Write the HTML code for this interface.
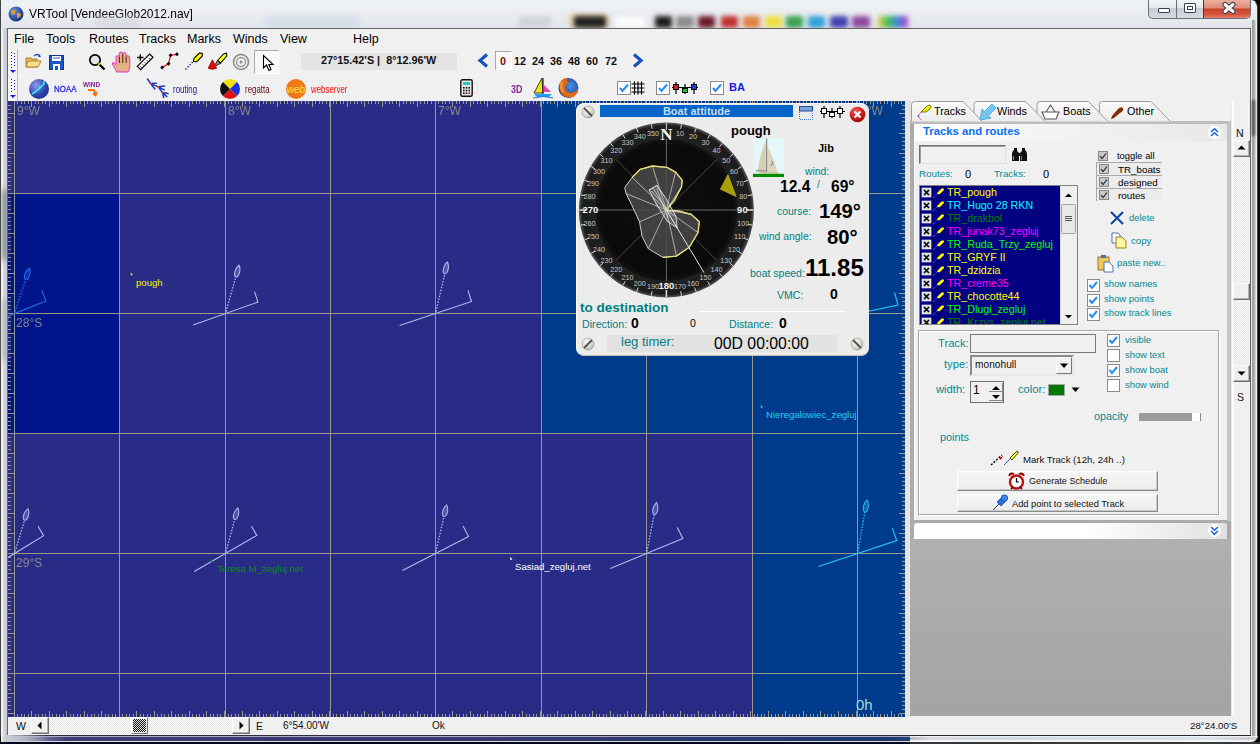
<!DOCTYPE html>
<html><head><meta charset="utf-8">
<style>
*{margin:0;padding:0;box-sizing:border-box}
html,body{width:1260px;height:744px;overflow:hidden;background:#0a0a0a;font-family:"Liberation Sans",sans-serif;font-size:11px;color:#000}
.a{position:absolute}
.t{position:absolute;white-space:nowrap;line-height:1}
svg{position:absolute;overflow:visible}
#frame{position:absolute;left:0;top:0;width:1257.5px;height:742px;border-radius:0 7px 7px 8px;background:linear-gradient(180deg,#eceff3 0,#f0f2f5 3px,#e8ebef 14px,#e2e6eb 28px,#d3d9e0 200px,#cfd5dc);border:1px solid #444;border-top-color:#e8eef4}
#client{position:absolute;left:7px;top:28px;width:1244px;height:708px;background:#f0f0f0;border:1px solid #646464}
.blob{position:absolute;top:16px;height:12px;filter:blur(2.4px);border-radius:2px}
.menu{position:absolute;top:32px;font-size:12.5px;color:#000}
.tl{color:#008080}
.grip{position:absolute;left:8px;width:10px;background:#f4f4f4;border-right:1px solid #b8b8b8;border-left:1px solid #fff}

</style></head><body>
<div id="frame"></div>
<div class="blob" style="left:569px;width:40px;background:#e6d4ae;top:14px;height:14px"></div>
<div class="blob" style="left:574px;width:32px;background:#222"></div>
<div class="blob" style="left:615px;width:30px;background:#fafafa"></div>
<div class="blob" style="left:655px;width:17px;background:#1c1c1c"></div>
<div class="blob" style="left:676px;width:18px;background:#8c8c8c"></div>
<div class="blob" style="left:698px;width:17px;background:#6e1a28"></div>
<div class="blob" style="left:721px;width:17px;background:#c0302e"></div>
<div class="blob" style="left:743px;width:17px;background:#e08040"></div>
<div class="blob" style="left:765px;width:17px;background:#eee040"></div>
<div class="blob" style="left:786px;width:17px;background:#3aa050"></div>
<div class="blob" style="left:808px;width:17px;background:#30a0d8"></div>
<div class="blob" style="left:830px;width:18px;background:#4040b0"></div>
<div class="blob" style="left:852px;width:18px;background:#9048a0"></div>
<div class="blob" style="left:878px;width:30px;background:linear-gradient(90deg,#e0d040,#40c060,#4080e0,#c040c0)"></div>
<!-- app icon globe -->
<svg style="left:8px;top:6px" width="16" height="16" viewBox="0 0 16 16"><defs><radialGradient id="glb" cx="0.35" cy="0.3" r="0.8"><stop offset="0" stop-color="#6a8fd8"/><stop offset="1" stop-color="#0a2a78"/></radialGradient></defs><circle cx="8" cy="8" r="7.5" fill="url(#glb)"/><path d="M3 5 Q6 3 8 5 Q7 8 5 9 Q3 8 3 5Z M9 7 Q12 6 13 9 Q11 13 9 12Z" fill="#e0a030"/></svg>
<div class="t" style="left:29px;top:7px;font-size:12px;color:#000;transform:scaleY(1.08);transform-origin:top">VRTool [VendeeGlob2012.nav]</div>
<!-- caption buttons -->
<div class="a" style="left:1148px;top:-1px;width:103px;height:20px;border:1px solid #6b6f7a;border-top:none;border-radius:0 0 5px 5px;overflow:hidden;background:linear-gradient(#f2f4f7,#e4e8ee 45%,#c8ccd4 50%,#d6dae2)">
  <div class="a" style="left:27px;top:0;width:1px;height:20px;background:#6b6f7a"></div>
  <div class="a" style="left:54px;top:0;width:49px;height:20px;border-left:1px solid #6b2a20;background:linear-gradient(#f0b4a4,#e08a74 45%,#c8402a 50%,#d85a40 80%,#e89080)"></div>
  <div class="a" style="left:9px;top:9px;width:12px;height:5px;background:#fff;border:1px solid #3b4256;border-radius:1px"></div>
  <div class="a" style="left:35px;top:4px;width:12px;height:10px;background:#fff;border:1px solid #3b4256;border-radius:1px"><div class="a" style="left:2px;top:2px;width:6px;height:4px;border:1px solid #3b4256"></div></div>
  <svg style="left:73px;top:3px" width="14" height="12" viewBox="0 0 14 12"><path d="M3 2.5 L11 9.5 M11 2.5 L3 9.5" stroke="#3b4256" stroke-width="5.2" stroke-linecap="round"/><path d="M3 2.5 L11 9.5 M11 2.5 L3 9.5" stroke="#fff" stroke-width="3" stroke-linecap="round"/></svg>
</div>
<div class="blob" style="left:519px;width:32px;background:#c4c8cc;opacity:0.6"></div>
<div class="blob" style="left:265px;width:95px;background:#c8d4e4;opacity:0.5"></div>
<div class="blob" style="left:95px;width:45px;background:#d0d4d8;opacity:0.5"></div>
<div id="client"></div>

<div class="menu t" style="left:14px;top:33px">File</div>
<div class="menu t" style="left:46px;top:33px">Tools</div>
<div class="menu t" style="left:89px;top:33px">Routes</div>
<div class="menu t" style="left:139px;top:33px">Tracks</div>
<div class="menu t" style="left:187px;top:33px">Marks</div>
<div class="menu t" style="left:233px;top:33px">Winds</div>
<div class="menu t" style="left:280px;top:33px">View</div>
<div class="menu t" style="left:353px;top:33px">Help</div>
<!-- grips -->
<div class="grip" style="top:49px;height:26px"></div>
<div class="grip" style="top:76px;height:25px"></div>
<svg style="left:9px;top:51px" width="9" height="24" viewBox="0 0 9 24"><g fill="#1a1ad8"><rect x="2" y="1" width="1" height="1"/><rect x="2" y="4" width="1" height="1"/><rect x="2" y="7" width="1" height="1"/><rect x="2" y="10" width="1" height="1"/><rect x="2" y="13" width="1" height="1"/><rect x="2" y="16" width="1" height="1"/><rect x="5" y="2" width="1" height="1"/><rect x="5" y="5" width="1" height="1"/><rect x="5" y="8" width="1" height="1"/><rect x="5" y="11" width="1" height="1"/><rect x="5" y="14" width="1" height="1"/><path d="M1 19 H7 L4 22Z"/></g></svg>
<svg style="left:9px;top:78px" width="9" height="24" viewBox="0 0 9 24"><g fill="#1a1ad8"><rect x="2" y="1" width="1" height="1"/><rect x="2" y="4" width="1" height="1"/><rect x="2" y="7" width="1" height="1"/><rect x="2" y="10" width="1" height="1"/><rect x="2" y="13" width="1" height="1"/><rect x="5" y="2" width="1" height="1"/><rect x="5" y="5" width="1" height="1"/><rect x="5" y="8" width="1" height="1"/><rect x="5" y="11" width="1" height="1"/><path d="M1 17 H7 L4 20Z"/></g></svg>
<!-- row1 icons -->
<!-- open folder -->
<svg style="left:25px;top:53px" width="17" height="16" viewBox="0 0 17 16"><path d="M1 5 H6 L7 6 H12 V14 H1Z" fill="#e8c060" stroke="#b08028" stroke-width="1"/><path d="M3 8 H16 L13 14 H1Z" fill="#f8e090" stroke="#b08028" stroke-width="1"/><path d="M9 3 Q12 0 15 3" fill="none" stroke="#2050b0" stroke-width="1.3"/><path d="M14 1 L16 4 L13 4Z" fill="#2050b0"/></svg>
<!-- save -->
<svg style="left:49px;top:55px" width="15" height="15" viewBox="0 0 15 15"><rect x="0.5" y="0.5" width="14" height="14" fill="#1a58c8" stroke="#0a3890"/><rect x="3" y="1" width="9" height="5" fill="#fff"/><rect x="4" y="2.5" width="7" height="1" fill="#1a58c8"/><rect x="4" y="9" width="7" height="6" fill="#fff"/><rect x="6" y="11" width="3" height="4" fill="#1a58c8"/></svg>
<!-- magnifier -->
<svg style="left:88px;top:53px" width="18" height="18" viewBox="0 0 18 18"><circle cx="7" cy="7" r="5.2" fill="#e4e4e4" stroke="#000" stroke-width="1.7"/><path d="M10.6 10.6 L16.5 16.5" stroke="#000" stroke-width="2.3"/><path d="M10.4 10.4 L11.8 11.8" stroke="#f0e000" stroke-width="2.2"/></svg>
<!-- hand -->
<svg style="left:111px;top:51px" width="21" height="23" viewBox="111 51 21 23"><path d="M116.5 72 Q115.5 69 114 67 L112.5 64 Q112 62.5 113.5 62.5 L116 64.5 V57.5 Q116 55.5 117.8 55.8 L119.3 56 V53.5 Q119.5 52 121 52 Q122.5 52 122.6 53.5 L122.8 53.2 Q123.5 52.3 124.8 52.6 Q126.2 53 126.2 54.5 V56.5 Q127 55.5 128.3 55.8 Q129.8 56.2 129.8 58 V66 Q129.8 69.5 128 72Z" fill="#e6ae84" stroke="#e020d0" stroke-width="0.9"/><path d="M119.4 56.5 V63 M122.7 54 V63 M126.2 56.5 V63" stroke="#5a3020" stroke-width="1.1"/></svg>
<!-- ruler -->
<svg style="left:134px;top:50px" width="22" height="24" viewBox="134 50 22 24"><path d="M137 57.5 H143.5 M140.3 54.3 V60.7" stroke="#000" stroke-width="1.3"/><path d="M137.3 66.3 L149.6 54 L153 57.3 L140.6 69.6Z" fill="#fff" stroke="#000" stroke-width="1.2"/><path d="M140.5 66.5 l1 1 M142.6 64.4 l1 1 M144.7 62.3 l1 1 M146.8 60.2 l1 1 M148.9 58.1 l1 1" stroke="#000" stroke-width="1"/></svg>
<!-- route polyline -->
<svg style="left:158px;top:50px" width="22" height="22" viewBox="158 50 22 22"><path d="M162.2 67.5 L168.5 63.8 L170.6 55.2 L176.9 54.3" fill="none" stroke="#f00000" stroke-width="1.2"/><g fill="#000"><path d="M162.2 65.5 l2 2 l-2 2 l-2 -2z"/><path d="M168.5 61.8 l2 2 l-2 2 l-2 -2z"/><path d="M170.6 53.2 l2 2 l-2 2 l-2 -2z"/><path d="M176.9 52.3 l2 2 l-2 2 l-2 -2z"/></g></svg>
<!-- yellow pen dotted -->
<svg style="left:182px;top:50px" width="22" height="22" viewBox="182 50 22 22"><path d="M185.5 69.5 L193.5 61" stroke="#1020b0" stroke-width="1.4" stroke-dasharray="1.4 1.6"/><path d="M193.5 61.5 L193.8 58.6 L199.5 53 L202.3 53.2 L202.3 56 L196.5 61.8Z" fill="#ffff00" stroke="#000" stroke-width="1.1" stroke-linejoin="round"/></svg>
<!-- paint / highlighter -->
<svg style="left:206px;top:50px" width="22" height="22" viewBox="206 50 22 22"><path d="M217.5 60.5 L223.5 54 L226.5 53 L226.8 56 L220.5 63.2Z" fill="#ffff00" stroke="#000" stroke-width="1.1" stroke-linejoin="round"/><path d="M217.5 60.5 L220.5 63.2 L216.2 65.5 L215.3 64.6Z" fill="#999" stroke="#000" stroke-width="0.9"/><path d="M212.4 59.8 L208.2 68.2 Q212.4 70.5 216.6 68.2Z" fill="#f00000" stroke="#700" stroke-width="0.7"/></svg>
<!-- target -->
<svg style="left:232px;top:53px" width="18" height="18" viewBox="0 0 18 18"><circle cx="9" cy="9" r="7.5" fill="none" stroke="#8a8a8a" stroke-width="1.6"/><circle cx="9" cy="9" r="4.5" fill="none" stroke="#9a9a9a" stroke-width="1.4"/><circle cx="9" cy="9" r="1.5" fill="#888"/></svg>
<!-- pointer selected -->
<div class="a" style="left:254px;top:50px;width:25px;height:24px;border:1px solid #a8a8a8;border-right-color:#fff;border-bottom-color:#fff;background:#f8f8f8"></div>
<svg style="left:262px;top:54px" width="14" height="18" viewBox="0 0 14 18"><path d="M1.5 1.5 V14 L4.5 11 L7 16.5 L9 15.5 L6.8 10.5 H11Z" fill="#fff" stroke="#000" stroke-width="1.1"/></svg>
<!-- coord box -->
<div class="a" style="left:301px;top:53px;width:156px;height:17px;background:#e4e4e4"></div>
<div class="t" style="left:321px;top:55px;font-size:10.8px;font-weight:bold;color:#111">27°15.42'S |&nbsp; 8°12.96'W</div>
<!-- time chevrons -->
<svg style="left:477px;top:53px" width="13" height="15" viewBox="0 0 13 15"><path d="M10 1.5 L3 7.5 L10 13.5" fill="none" stroke="#1a50c0" stroke-width="3.2"/></svg>
<div class="a" style="left:495px;top:51px;width:17px;height:19px;border:1px solid #a8a8a8;border-right-color:#fff;border-bottom-color:#fff;background:#f6f6f6"></div>
<div class="t" style="left:500px;top:56px;font-size:10.8px;font-weight:bold;color:#7a1010">0</div>
<div class="t" style="left:514px;top:56px;font-size:10.8px;font-weight:bold;color:#111">12</div>
<div class="t" style="left:532px;top:56px;font-size:10.8px;font-weight:bold;color:#111">24</div>
<div class="t" style="left:550px;top:56px;font-size:10.8px;font-weight:bold;color:#111">36</div>
<div class="t" style="left:568px;top:56px;font-size:10.8px;font-weight:bold;color:#111">48</div>
<div class="t" style="left:586px;top:56px;font-size:10.8px;font-weight:bold;color:#111">60</div>
<div class="t" style="left:605px;top:56px;font-size:10.8px;font-weight:bold;color:#111">72</div>
<svg style="left:631px;top:53px" width="13" height="15" viewBox="0 0 13 15"><path d="M3 1.5 L10 7.5 L3 13.5" fill="none" stroke="#1a50c0" stroke-width="3.2"/></svg>

<div class="a" style="left:8px;top:101px;width:897px;height:616px;overflow:hidden;background:#292c86">
<svg style="left:0;top:0" width="897" height="616" viewBox="8 101 897 616" shape-rendering="crispEdges">
<rect x="8" y="193" width="111" height="240" fill="#00158a"/>
<rect x="541" y="101" width="364" height="332" fill="#003a8b"/>
<rect x="752" y="433" width="153" height="284" fill="#003a8b"/>
<path d="M119.5 101V717 M225.5 101V717 M330.5 101V717 M435.5 101V717 M541.5 101V717 M646.5 101V717 M752.5 101V717 M857.5 101V717 M8 193.5H905 M8 313.5H905 M8 433.5H905 M8 553.5H905 M8 673.5H905 M14.5 101V717" stroke="#9a988a" stroke-width="1" fill="none"/>
<path d="M17.5 101v3 M17.5 717v-3 M21.5 101v3 M21.5 717v-3 M24.5 101v3 M24.5 717v-3 M28.5 101v3 M28.5 717v-3 M31.5 101v6 M31.5 717v-6 M35.5 101v3 M35.5 717v-3 M38.5 101v3 M38.5 717v-3 M42.5 101v3 M42.5 717v-3 M45.5 101v3 M45.5 717v-3 M49.5 101v6 M49.5 717v-6 M52.5 101v3 M52.5 717v-3 M56.5 101v3 M56.5 717v-3 M59.5 101v3 M59.5 717v-3 M63.5 101v3 M63.5 717v-3 M66.5 101v6 M66.5 717v-6 M70.5 101v3 M70.5 717v-3 M73.5 101v3 M73.5 717v-3 M77.5 101v3 M77.5 717v-3 M80.5 101v3 M80.5 717v-3 M84.5 101v6 M84.5 717v-6 M87.5 101v3 M87.5 717v-3 M91.5 101v3 M91.5 717v-3 M94.5 101v3 M94.5 717v-3 M98.5 101v3 M98.5 717v-3 M101.5 101v6 M101.5 717v-6 M105.5 101v3 M105.5 717v-3 M108.5 101v3 M108.5 717v-3 M112.5 101v3 M112.5 717v-3 M115.5 101v3 M115.5 717v-3 M119.5 101v6 M119.5 717v-6 M122.5 101v3 M122.5 717v-3 M126.5 101v3 M126.5 717v-3 M129.5 101v3 M129.5 717v-3 M133.5 101v3 M133.5 717v-3 M136.5 101v6 M136.5 717v-6 M140.5 101v3 M140.5 717v-3 M143.5 101v3 M143.5 717v-3 M147.5 101v3 M147.5 717v-3 M150.5 101v3 M150.5 717v-3 M154.5 101v6 M154.5 717v-6 M157.5 101v3 M157.5 717v-3 M161.5 101v3 M161.5 717v-3 M164.5 101v3 M164.5 717v-3 M168.5 101v3 M168.5 717v-3 M171.5 101v6 M171.5 717v-6 M175.5 101v3 M175.5 717v-3 M178.5 101v3 M178.5 717v-3 M182.5 101v3 M182.5 717v-3 M185.5 101v3 M185.5 717v-3 M189.5 101v6 M189.5 717v-6 M192.5 101v3 M192.5 717v-3 M196.5 101v3 M196.5 717v-3 M199.5 101v3 M199.5 717v-3 M203.5 101v3 M203.5 717v-3 M206.5 101v6 M206.5 717v-6 M210.5 101v3 M210.5 717v-3 M213.5 101v3 M213.5 717v-3 M217.5 101v3 M217.5 717v-3 M220.5 101v3 M220.5 717v-3 M224.5 101v6 M224.5 717v-6 M228.5 101v3 M228.5 717v-3 M231.5 101v3 M231.5 717v-3 M235.5 101v3 M235.5 717v-3 M238.5 101v3 M238.5 717v-3 M242.5 101v6 M242.5 717v-6 M245.5 101v3 M245.5 717v-3 M249.5 101v3 M249.5 717v-3 M252.5 101v3 M252.5 717v-3 M256.5 101v3 M256.5 717v-3 M259.5 101v6 M259.5 717v-6 M263.5 101v3 M263.5 717v-3 M266.5 101v3 M266.5 717v-3 M270.5 101v3 M270.5 717v-3 M273.5 101v3 M273.5 717v-3 M277.5 101v6 M277.5 717v-6 M280.5 101v3 M280.5 717v-3 M284.5 101v3 M284.5 717v-3 M287.5 101v3 M287.5 717v-3 M291.5 101v3 M291.5 717v-3 M294.5 101v6 M294.5 717v-6 M298.5 101v3 M298.5 717v-3 M301.5 101v3 M301.5 717v-3 M305.5 101v3 M305.5 717v-3 M308.5 101v3 M308.5 717v-3 M312.5 101v6 M312.5 717v-6 M315.5 101v3 M315.5 717v-3 M319.5 101v3 M319.5 717v-3 M322.5 101v3 M322.5 717v-3 M326.5 101v3 M326.5 717v-3 M329.5 101v6 M329.5 717v-6 M333.5 101v3 M333.5 717v-3 M336.5 101v3 M336.5 717v-3 M340.5 101v3 M340.5 717v-3 M343.5 101v3 M343.5 717v-3 M347.5 101v6 M347.5 717v-6 M350.5 101v3 M350.5 717v-3 M354.5 101v3 M354.5 717v-3 M357.5 101v3 M357.5 717v-3 M361.5 101v3 M361.5 717v-3 M364.5 101v6 M364.5 717v-6 M368.5 101v3 M368.5 717v-3 M371.5 101v3 M371.5 717v-3 M375.5 101v3 M375.5 717v-3 M378.5 101v3 M378.5 717v-3 M382.5 101v6 M382.5 717v-6 M385.5 101v3 M385.5 717v-3 M389.5 101v3 M389.5 717v-3 M392.5 101v3 M392.5 717v-3 M396.5 101v3 M396.5 717v-3 M399.5 101v6 M399.5 717v-6 M403.5 101v3 M403.5 717v-3 M406.5 101v3 M406.5 717v-3 M410.5 101v3 M410.5 717v-3 M413.5 101v3 M413.5 717v-3 M417.5 101v6 M417.5 717v-6 M420.5 101v3 M420.5 717v-3 M424.5 101v3 M424.5 717v-3 M427.5 101v3 M427.5 717v-3 M431.5 101v3 M431.5 717v-3 M435.5 101v6 M435.5 717v-6 M438.5 101v3 M438.5 717v-3 M442.5 101v3 M442.5 717v-3 M445.5 101v3 M445.5 717v-3 M449.5 101v3 M449.5 717v-3 M452.5 101v6 M452.5 717v-6 M456.5 101v3 M456.5 717v-3 M459.5 101v3 M459.5 717v-3 M463.5 101v3 M463.5 717v-3 M466.5 101v3 M466.5 717v-3 M470.5 101v6 M470.5 717v-6 M473.5 101v3 M473.5 717v-3 M477.5 101v3 M477.5 717v-3 M480.5 101v3 M480.5 717v-3 M484.5 101v3 M484.5 717v-3 M487.5 101v6 M487.5 717v-6 M491.5 101v3 M491.5 717v-3 M494.5 101v3 M494.5 717v-3 M498.5 101v3 M498.5 717v-3 M501.5 101v3 M501.5 717v-3 M505.5 101v6 M505.5 717v-6 M508.5 101v3 M508.5 717v-3 M512.5 101v3 M512.5 717v-3 M515.5 101v3 M515.5 717v-3 M519.5 101v3 M519.5 717v-3 M522.5 101v6 M522.5 717v-6 M526.5 101v3 M526.5 717v-3 M529.5 101v3 M529.5 717v-3 M533.5 101v3 M533.5 717v-3 M536.5 101v3 M536.5 717v-3 M540.5 101v6 M540.5 717v-6 M543.5 101v3 M543.5 717v-3 M547.5 101v3 M547.5 717v-3 M550.5 101v3 M550.5 717v-3 M554.5 101v3 M554.5 717v-3 M557.5 101v6 M557.5 717v-6 M561.5 101v3 M561.5 717v-3 M564.5 101v3 M564.5 717v-3 M568.5 101v3 M568.5 717v-3 M571.5 101v3 M571.5 717v-3 M575.5 101v6 M575.5 717v-6 M578.5 101v3 M578.5 717v-3 M582.5 101v3 M582.5 717v-3 M585.5 101v3 M585.5 717v-3 M589.5 101v3 M589.5 717v-3 M592.5 101v6 M592.5 717v-6 M596.5 101v3 M596.5 717v-3 M599.5 101v3 M599.5 717v-3 M603.5 101v3 M603.5 717v-3 M606.5 101v3 M606.5 717v-3 M610.5 101v6 M610.5 717v-6 M613.5 101v3 M613.5 717v-3 M617.5 101v3 M617.5 717v-3 M620.5 101v3 M620.5 717v-3 M624.5 101v3 M624.5 717v-3 M627.5 101v6 M627.5 717v-6 M631.5 101v3 M631.5 717v-3 M634.5 101v3 M634.5 717v-3 M638.5 101v3 M638.5 717v-3 M641.5 101v3 M641.5 717v-3 M645.5 101v6 M645.5 717v-6 M649.5 101v3 M649.5 717v-3 M652.5 101v3 M652.5 717v-3 M656.5 101v3 M656.5 717v-3 M659.5 101v3 M659.5 717v-3 M663.5 101v6 M663.5 717v-6 M666.5 101v3 M666.5 717v-3 M670.5 101v3 M670.5 717v-3 M673.5 101v3 M673.5 717v-3 M677.5 101v3 M677.5 717v-3 M680.5 101v6 M680.5 717v-6 M684.5 101v3 M684.5 717v-3 M687.5 101v3 M687.5 717v-3 M691.5 101v3 M691.5 717v-3 M694.5 101v3 M694.5 717v-3 M698.5 101v6 M698.5 717v-6 M701.5 101v3 M701.5 717v-3 M705.5 101v3 M705.5 717v-3 M708.5 101v3 M708.5 717v-3 M712.5 101v3 M712.5 717v-3 M715.5 101v6 M715.5 717v-6 M719.5 101v3 M719.5 717v-3 M722.5 101v3 M722.5 717v-3 M726.5 101v3 M726.5 717v-3 M729.5 101v3 M729.5 717v-3 M733.5 101v6 M733.5 717v-6 M736.5 101v3 M736.5 717v-3 M740.5 101v3 M740.5 717v-3 M743.5 101v3 M743.5 717v-3 M747.5 101v3 M747.5 717v-3 M750.5 101v6 M750.5 717v-6 M754.5 101v3 M754.5 717v-3 M757.5 101v3 M757.5 717v-3 M761.5 101v3 M761.5 717v-3 M764.5 101v3 M764.5 717v-3 M768.5 101v6 M768.5 717v-6 M771.5 101v3 M771.5 717v-3 M775.5 101v3 M775.5 717v-3 M778.5 101v3 M778.5 717v-3 M782.5 101v3 M782.5 717v-3 M785.5 101v6 M785.5 717v-6 M789.5 101v3 M789.5 717v-3 M792.5 101v3 M792.5 717v-3 M796.5 101v3 M796.5 717v-3 M799.5 101v3 M799.5 717v-3 M803.5 101v6 M803.5 717v-6 M806.5 101v3 M806.5 717v-3 M810.5 101v3 M810.5 717v-3 M813.5 101v3 M813.5 717v-3 M817.5 101v3 M817.5 717v-3 M820.5 101v6 M820.5 717v-6 M824.5 101v3 M824.5 717v-3 M827.5 101v3 M827.5 717v-3 M831.5 101v3 M831.5 717v-3 M834.5 101v3 M834.5 717v-3 M838.5 101v6 M838.5 717v-6 M841.5 101v3 M841.5 717v-3 M845.5 101v3 M845.5 717v-3 M848.5 101v3 M848.5 717v-3 M852.5 101v3 M852.5 717v-3 M856.5 101v6 M856.5 717v-6 M859.5 101v3 M859.5 717v-3 M863.5 101v3 M863.5 717v-3 M866.5 101v3 M866.5 717v-3 M870.5 101v3 M870.5 717v-3 M873.5 101v6 M873.5 717v-6 M877.5 101v3 M877.5 717v-3 M880.5 101v3 M880.5 717v-3 M884.5 101v3 M884.5 717v-3 M887.5 101v3 M887.5 717v-3 M891.5 101v6 M891.5 717v-6 M894.5 101v3 M894.5 717v-3 M898.5 101v3 M898.5 717v-3 M901.5 101v3 M901.5 717v-3 M8 105.5h3 M905 105.5h-3 M8 109.5h3 M905 109.5h-3 M8 113.5h6 M905 113.5h-6 M8 117.5h3 M905 117.5h-3 M8 121.5h3 M905 121.5h-3 M8 125.5h3 M905 125.5h-3 M8 129.5h3 M905 129.5h-3 M8 133.5h6 M905 133.5h-6 M8 137.5h3 M905 137.5h-3 M8 141.5h3 M905 141.5h-3 M8 145.5h3 M905 145.5h-3 M8 149.5h3 M905 149.5h-3 M8 153.5h6 M905 153.5h-6 M8 157.5h3 M905 157.5h-3 M8 161.5h3 M905 161.5h-3 M8 165.5h3 M905 165.5h-3 M8 169.5h3 M905 169.5h-3 M8 173.5h6 M905 173.5h-6 M8 177.5h3 M905 177.5h-3 M8 181.5h3 M905 181.5h-3 M8 185.5h3 M905 185.5h-3 M8 189.5h3 M905 189.5h-3 M8 193.5h6 M905 193.5h-6 M8 197.5h3 M905 197.5h-3 M8 201.5h3 M905 201.5h-3 M8 205.5h3 M905 205.5h-3 M8 209.5h3 M905 209.5h-3 M8 213.5h6 M905 213.5h-6 M8 217.5h3 M905 217.5h-3 M8 221.5h3 M905 221.5h-3 M8 225.5h3 M905 225.5h-3 M8 229.5h3 M905 229.5h-3 M8 233.5h6 M905 233.5h-6 M8 237.5h3 M905 237.5h-3 M8 241.5h3 M905 241.5h-3 M8 245.5h3 M905 245.5h-3 M8 249.5h3 M905 249.5h-3 M8 253.5h6 M905 253.5h-6 M8 257.5h3 M905 257.5h-3 M8 261.5h3 M905 261.5h-3 M8 265.5h3 M905 265.5h-3 M8 269.5h3 M905 269.5h-3 M8 273.5h6 M905 273.5h-6 M8 277.5h3 M905 277.5h-3 M8 281.5h3 M905 281.5h-3 M8 285.5h3 M905 285.5h-3 M8 289.5h3 M905 289.5h-3 M8 293.5h6 M905 293.5h-6 M8 297.5h3 M905 297.5h-3 M8 301.5h3 M905 301.5h-3 M8 305.5h3 M905 305.5h-3 M8 309.5h3 M905 309.5h-3 M8 313.5h6 M905 313.5h-6 M8 317.5h3 M905 317.5h-3 M8 321.5h3 M905 321.5h-3 M8 325.5h3 M905 325.5h-3 M8 329.5h3 M905 329.5h-3 M8 333.5h6 M905 333.5h-6 M8 337.5h3 M905 337.5h-3 M8 341.5h3 M905 341.5h-3 M8 345.5h3 M905 345.5h-3 M8 349.5h3 M905 349.5h-3 M8 353.5h6 M905 353.5h-6 M8 357.5h3 M905 357.5h-3 M8 361.5h3 M905 361.5h-3 M8 365.5h3 M905 365.5h-3 M8 369.5h3 M905 369.5h-3 M8 373.5h6 M905 373.5h-6 M8 377.5h3 M905 377.5h-3 M8 381.5h3 M905 381.5h-3 M8 385.5h3 M905 385.5h-3 M8 389.5h3 M905 389.5h-3 M8 393.5h6 M905 393.5h-6 M8 397.5h3 M905 397.5h-3 M8 401.5h3 M905 401.5h-3 M8 405.5h3 M905 405.5h-3 M8 409.5h3 M905 409.5h-3 M8 413.5h6 M905 413.5h-6 M8 417.5h3 M905 417.5h-3 M8 421.5h3 M905 421.5h-3 M8 425.5h3 M905 425.5h-3 M8 429.5h3 M905 429.5h-3 M8 433.5h6 M905 433.5h-6 M8 437.5h3 M905 437.5h-3 M8 441.5h3 M905 441.5h-3 M8 445.5h3 M905 445.5h-3 M8 449.5h3 M905 449.5h-3 M8 453.5h6 M905 453.5h-6 M8 457.5h3 M905 457.5h-3 M8 461.5h3 M905 461.5h-3 M8 465.5h3 M905 465.5h-3 M8 469.5h3 M905 469.5h-3 M8 473.5h6 M905 473.5h-6 M8 477.5h3 M905 477.5h-3 M8 481.5h3 M905 481.5h-3 M8 485.5h3 M905 485.5h-3 M8 489.5h3 M905 489.5h-3 M8 493.5h6 M905 493.5h-6 M8 497.5h3 M905 497.5h-3 M8 501.5h3 M905 501.5h-3 M8 505.5h3 M905 505.5h-3 M8 509.5h3 M905 509.5h-3 M8 513.5h6 M905 513.5h-6 M8 517.5h3 M905 517.5h-3 M8 521.5h3 M905 521.5h-3 M8 525.5h3 M905 525.5h-3 M8 529.5h3 M905 529.5h-3 M8 533.5h6 M905 533.5h-6 M8 537.5h3 M905 537.5h-3 M8 541.5h3 M905 541.5h-3 M8 545.5h3 M905 545.5h-3 M8 549.5h3 M905 549.5h-3 M8 553.5h6 M905 553.5h-6 M8 557.5h3 M905 557.5h-3 M8 561.5h3 M905 561.5h-3 M8 565.5h3 M905 565.5h-3 M8 569.5h3 M905 569.5h-3 M8 573.5h6 M905 573.5h-6 M8 577.5h3 M905 577.5h-3 M8 581.5h3 M905 581.5h-3 M8 585.5h3 M905 585.5h-3 M8 589.5h3 M905 589.5h-3 M8 593.5h6 M905 593.5h-6 M8 597.5h3 M905 597.5h-3 M8 601.5h3 M905 601.5h-3 M8 605.5h3 M905 605.5h-3 M8 609.5h3 M905 609.5h-3 M8 613.5h6 M905 613.5h-6 M8 617.5h3 M905 617.5h-3 M8 621.5h3 M905 621.5h-3 M8 625.5h3 M905 625.5h-3 M8 629.5h3 M905 629.5h-3 M8 633.5h6 M905 633.5h-6 M8 637.5h3 M905 637.5h-3 M8 641.5h3 M905 641.5h-3 M8 645.5h3 M905 645.5h-3 M8 649.5h3 M905 649.5h-3 M8 653.5h6 M905 653.5h-6 M8 657.5h3 M905 657.5h-3 M8 661.5h3 M905 661.5h-3 M8 665.5h3 M905 665.5h-3 M8 669.5h3 M905 669.5h-3 M8 673.5h6 M905 673.5h-6 M8 677.5h3 M905 677.5h-3 M8 681.5h3 M905 681.5h-3 M8 685.5h3 M905 685.5h-3 M8 689.5h3 M905 689.5h-3 M8 693.5h6 M905 693.5h-6 M8 697.5h3 M905 697.5h-3 M8 701.5h3 M905 701.5h-3 M8 705.5h3 M905 705.5h-3 M8 709.5h3 M905 709.5h-3 M8 713.5h6 M905 713.5h-6" stroke="#9a988a" stroke-width="1" fill="none"/>
</svg>
<div class="t" style="left:9px;top:3px;font-size:13px;color:#9a988a;opacity:0.85;transform:scaleX(0.93);transform-origin:top left">9°W</div>
<div class="t" style="left:220px;top:3px;font-size:13px;color:#9a988a;opacity:0.85;transform:scaleX(0.93);transform-origin:top left">8°W</div>
<div class="t" style="left:430px;top:3px;font-size:13px;color:#9a988a;opacity:0.85;transform:scaleX(0.93);transform-origin:top left">7°W</div>
<div class="t" style="left:852px;top:3px;font-size:13px;color:#9a988a;opacity:0.85;transform:scaleX(0.93);transform-origin:top left">5°W</div>
<div class="t" style="left:8px;top:215px;font-size:13px;color:#9a988a;opacity:0.85;transform:scaleX(0.93);transform-origin:top left">28°S</div>
<div class="t" style="left:8px;top:455px;font-size:13px;color:#9a988a;opacity:0.85;transform:scaleX(0.93);transform-origin:top left">29°S</div>
<div class="t" style="left:848px;top:596px;font-size:15px;color:#a0dcdc">0h</div>
<svg style="left:0;top:0" width="897" height="616" viewBox="8 101 897 616">
<path d="M-17.0 326.1 L46.0 300.9 l-4.2 -10.4" fill="none" stroke="#2070f0" stroke-width="1.1"/><path d="M15.1 311.6 L25.7 279.6" stroke="#2070f0" stroke-width="1.3" stroke-dasharray="1.5 1.5"/><path d="M0 -6.5 Q2.8 -3 2.3 2 Q2 5.5 0 5.5 Q-2 5.5 -2.3 2 Q-2.8 -3 0 -6.5Z" transform="translate(27.4 274.4) rotate(18.3)" fill="#2070f0" fill-opacity="0.3" stroke="#2070f0" stroke-width="1"/>
<path d="M193.1 324.9 L257.9 302.1 l-3.3 -10.4" fill="none" stroke="#b0bcf0" stroke-width="1.1"/><path d="M226.0 311.6 L235.9 276.8" stroke="#b0bcf0" stroke-width="1.3" stroke-dasharray="1.5 1.5"/><path d="M0 -6.5 Q2.8 -3 2.3 2 Q2 5.5 0 5.5 Q-2 5.5 -2.3 2 Q-2.8 -3 0 -6.5Z" transform="translate(237.4 271.5) rotate(15.8)" fill="#b0bcf0" fill-opacity="0.3" stroke="#b0bcf0" stroke-width="1"/>
<path d="M399.5 325.5 L471.5 301.5 l-3.5 -11.1" fill="none" stroke="#b0bcf0" stroke-width="1.1"/><path d="M436.0 311.6 L444.8 273.7" stroke="#b0bcf0" stroke-width="1.3" stroke-dasharray="1.5 1.5"/><path d="M0 -6.5 Q2.8 -3 2.3 2 Q2 5.5 0 5.5 Q-2 5.5 -2.3 2 Q-2.8 -3 0 -6.5Z" transform="translate(446.0 268.3) rotate(13.1)" fill="#b0bcf0" fill-opacity="0.3" stroke="#b0bcf0" stroke-width="1"/>
<path d="M817.0 322.0 L898.0 305.0 l-3.5 -12.5" fill="none" stroke="#20c8f0" stroke-width="1.1"/><path d="M857.8 311.5 L864.6 271.9" stroke="#20c8f0" stroke-width="1.3" stroke-dasharray="1.5 1.5"/><path d="M0 -6.5 Q2.8 -3 2.3 2 Q2 5.5 0 5.5 Q-2 5.5 -2.3 2 Q-2.8 -3 0 -6.5Z" transform="translate(865.5 266.5) rotate(9.7)" fill="#20c8f0" fill-opacity="0.3" stroke="#20c8f0" stroke-width="1"/>
<path d="M-14.6 571.4 L43.6 535.6 l-5.6 -9.4" fill="none" stroke="#b0bcf0" stroke-width="1.1"/><path d="M15.1 551.6 L24.6 520.2" stroke="#b0bcf0" stroke-width="1.3" stroke-dasharray="1.5 1.5"/><path d="M0 -6.5 Q2.8 -3 2.3 2 Q2 5.5 0 5.5 Q-2 5.5 -2.3 2 Q-2.8 -3 0 -6.5Z" transform="translate(26.2 514.9) rotate(16.9)" fill="#b0bcf0" fill-opacity="0.3" stroke="#b0bcf0" stroke-width="1"/>
<path d="M194.2 571.6 L256.8 535.4 l-5.4 -9.1" fill="none" stroke="#b0bcf0" stroke-width="1.1"/><path d="M226.0 551.6 L234.8 519.4" stroke="#b0bcf0" stroke-width="1.3" stroke-dasharray="1.5 1.5"/><path d="M0 -6.5 Q2.8 -3 2.3 2 Q2 5.5 0 5.5 Q-2 5.5 -2.3 2 Q-2.8 -3 0 -6.5Z" transform="translate(236.2 514.1) rotate(15.2)" fill="#b0bcf0" fill-opacity="0.3" stroke="#b0bcf0" stroke-width="1"/>
<path d="M402.4 570.4 L468.6 536.6 l-5.5 -10.5" fill="none" stroke="#b0bcf0" stroke-width="1.1"/><path d="M435.9 551.6 L444.0 516.6" stroke="#b0bcf0" stroke-width="1.3" stroke-dasharray="1.5 1.5"/><path d="M0 -6.5 Q2.8 -3 2.3 2 Q2 5.5 0 5.5 Q-2 5.5 -2.3 2 Q-2.8 -3 0 -6.5Z" transform="translate(445.2 511.2) rotate(12.9)" fill="#b0bcf0" fill-opacity="0.3" stroke="#b0bcf0" stroke-width="1"/>
<path d="M610.2 568.6 L682.8 538.4 l-5.5 -11" fill="none" stroke="#b0bcf0" stroke-width="1.1"/><path d="M646.9 551.5 L654.3 514.3" stroke="#b0bcf0" stroke-width="1.3" stroke-dasharray="1.5 1.5"/><path d="M0 -6.5 Q2.8 -3 2.3 2 Q2 5.5 0 5.5 Q-2 5.5 -2.3 2 Q-2.8 -3 0 -6.5Z" transform="translate(655.4 508.9) rotate(11.3)" fill="#b0bcf0" fill-opacity="0.3" stroke="#b0bcf0" stroke-width="1"/>
<path d="M818.3 566.4 L896.7 540.6 l-4.3 -12.4" fill="none" stroke="#20c8f0" stroke-width="1.1"/><path d="M857.9 551.5 L864.9 511.9" stroke="#20c8f0" stroke-width="1.3" stroke-dasharray="1.5 1.5"/><path d="M0 -6.5 Q2.8 -3 2.3 2 Q2 5.5 0 5.5 Q-2 5.5 -2.3 2 Q-2.8 -3 0 -6.5Z" transform="translate(865.9 506.5) rotate(10.1)" fill="#20c8f0" fill-opacity="0.3" stroke="#20c8f0" stroke-width="1"/>
<path d="M130.5 272.5 l2.5 2 l-2 1.2z" fill="#f0f020"/>
<path d="M760.5 405 l2.5 2 l-2 1.2z" fill="#20d0f0"/>
<path d="M510 557 l2.5 2 l-2 1.2z" fill="#ffffff"/>
<path d="M210.5 559 l2.5 2 l-2 1.2z" fill="#109010"/>
</svg>
<div class="t" style="left:128px;top:177px;font-size:9.6px;color:#f4f400">pough</div>
<div class="t" style="left:758px;top:309px;font-size:9.6px;color:#20d0f0">Nieregalowiec_zegluj</div>
<div class="t" style="left:507px;top:461px;font-size:9.6px;color:#ffffff">Sasiad_zegluj.net</div>
<div class="t" style="left:209px;top:463px;font-size:9.6px;color:#108a10">Teresa M_zegluj.net</div></div>
<div class="a" style="left:576px;top:103px;width:293px;height:253px;background:#ececec;border-radius:8px;border-left:1px solid #fff;border-top:1px solid #fff;border-bottom:1px solid #c8bcb0;box-shadow:0 0 0 0 #000"></div>
<svg style="left:580.5px;top:105px" width="14" height="14" viewBox="0 0 14 14"><defs><radialGradient id="sg587.5112" cx="0.4" cy="0.35" r="0.7"><stop offset="0" stop-color="#fafaf0"/><stop offset="0.7" stop-color="#d4d4cc"/><stop offset="1" stop-color="#9a9a94"/></radialGradient></defs><circle cx="7" cy="7" r="6" fill="url(#sg587.5112)" stroke="#a8a8a0" stroke-width="0.8"/><path d="M3 3 L11 11" transform="rotate(0 7 7)" stroke="#555" stroke-width="2"/></svg>
<svg style="left:580.5px;top:337px" width="14" height="14" viewBox="0 0 14 14"><defs><radialGradient id="sg587.5344" cx="0.4" cy="0.35" r="0.7"><stop offset="0" stop-color="#fafaf0"/><stop offset="0.7" stop-color="#d4d4cc"/><stop offset="1" stop-color="#9a9a94"/></radialGradient></defs><circle cx="7" cy="7" r="6" fill="url(#sg587.5344)" stroke="#a8a8a0" stroke-width="0.8"/><path d="M3 3 L11 11" transform="rotate(90 7 7)" stroke="#555" stroke-width="2"/></svg>
<svg style="left:850px;top:337px" width="14" height="14" viewBox="0 0 14 14"><defs><radialGradient id="sg857344" cx="0.4" cy="0.35" r="0.7"><stop offset="0" stop-color="#fafaf0"/><stop offset="0.7" stop-color="#d4d4cc"/><stop offset="1" stop-color="#9a9a94"/></radialGradient></defs><circle cx="7" cy="7" r="6" fill="url(#sg857344)" stroke="#a8a8a0" stroke-width="0.8"/><path d="M3 3 L11 11" transform="rotate(0 7 7)" stroke="#555" stroke-width="2"/></svg>
<div class="a" style="left:600px;top:105px;width:193px;height:12px;background:#0064c8"></div>
<div class="t" style="left:600px;top:105.5px;width:193px;text-align:center;font-size:11px;font-weight:bold;color:#c8dcf4">Boat attitude</div>
<svg style="left:799px;top:106px" width="14" height="14" viewBox="0 0 14 14"><rect x="0.5" y="0.5" width="13" height="4.5" fill="#7aa0d8" stroke="#1c4aa0"/><path d="M0.5 6 V13.5 H13.5 V6" fill="none" stroke="#4a7ad0" stroke-dasharray="1 1"/></svg>
<svg style="left:820px;top:106px" width="26" height="13" viewBox="0 0 26 13"><path d="M0 5.5 H25 M4 0 V12 M12 2 V12 M20 0 V12" stroke="#000" stroke-width="1.2"/><rect x="1.5" y="2.5" width="5" height="5" fill="#fff" stroke="#000"/><rect x="9.5" y="6.5" width="5" height="4" fill="#fff" stroke="#000"/><rect x="17.5" y="2.5" width="5" height="5" fill="#fff" stroke="#000"/></svg>
<svg style="left:849px;top:106px" width="17" height="17" viewBox="0 0 17 17"><defs><radialGradient id="cg" cx="0.4" cy="0.3" r="0.75"><stop offset="0" stop-color="#f06060"/><stop offset="0.6" stop-color="#d01818"/><stop offset="1" stop-color="#900808"/></radialGradient></defs><circle cx="8.5" cy="8.5" r="7.8" fill="url(#cg)"/><path d="M5.5 5.5 L11.5 11.5 M11.5 5.5 L5.5 11.5" stroke="#fff" stroke-width="2.2"/></svg>
<svg style="left:576px;top:103px" width="293" height="253" viewBox="0 0 293 253">
<defs><radialGradient id="ring" cx="0.5" cy="0.5" r="0.5"><stop offset="0.8" stop-color="#222"/><stop offset="0.96" stop-color="#1c1c1c"/><stop offset="1" stop-color="#555"/></radialGradient><radialGradient id="disc" cx="0.5" cy="0.5" r="0.5"><stop offset="0" stop-color="#0e0e0e"/><stop offset="0.92" stop-color="#0a0a0a"/><stop offset="1" stop-color="#141414"/></radialGradient></defs>
<circle cx="90.39999999999998" cy="107" r="87.5" fill="url(#ring)"/>
<circle cx="90.39999999999998" cy="107" r="71" fill="url(#disc)"/>
<path d="M90.39999999999998 36V178M19.399999999999977 107H161.39999999999998" stroke="#6a6a6a" stroke-width="1"/>
<path d="M40.1954185357551 56.795418535755125L140.60458146424486 157.20458146424488M140.60458146424486 56.795418535755125L40.1954185357551 157.20458146424488" stroke="#4a4a4a" stroke-width="1"/>
<path d="M90.4 20.0L90.4 27.0" stroke="#d8d8d8" stroke-width="1"/>
<text x="90.39999999999998" y="36.5" text-anchor="middle" font-family="Liberation Serif" font-weight="bold" font-size="17" fill="#f4f4f4">N</text>
<path d="M105.5 21.3L104.7 25.8" stroke="#d8d8d8" stroke-width="1"/>
<text x="103.9" y="32.8" text-anchor="middle" font-size="7.2" fill="#c8c8c8">10</text>
<path d="M120.2 25.2L118.6 29.5" stroke="#d8d8d8" stroke-width="1"/>
<text x="117.1" y="36.3" text-anchor="middle" font-size="7.2" fill="#c8c8c8">20</text>
<path d="M133.9 31.7L131.6 35.6" stroke="#d8d8d8" stroke-width="1"/>
<text x="129.4" y="42.1" text-anchor="middle" font-size="7.2" fill="#c8c8c8">30</text>
<path d="M146.3 40.4L143.4 43.8" stroke="#d8d8d8" stroke-width="1"/>
<text x="140.5" y="49.8" text-anchor="middle" font-size="7.2" fill="#c8c8c8">40</text>
<path d="M157.0 51.1L153.6 54.0" stroke="#d8d8d8" stroke-width="1"/>
<text x="150.2" y="59.5" text-anchor="middle" font-size="7.2" fill="#c8c8c8">50</text>
<path d="M165.7 63.5L161.8 65.8" stroke="#d8d8d8" stroke-width="1"/>
<text x="157.9" y="70.6" text-anchor="middle" font-size="7.2" fill="#c8c8c8">60</text>
<path d="M172.2 77.2L167.9 78.8" stroke="#d8d8d8" stroke-width="1"/>
<text x="163.7" y="82.9" text-anchor="middle" font-size="7.2" fill="#c8c8c8">70</text>
<path d="M176.1 91.9L171.6 92.7" stroke="#d8d8d8" stroke-width="1"/>
<text x="167.2" y="96.1" text-anchor="middle" font-size="7.2" fill="#c8c8c8">80</text>
<path d="M177.4 107.0L170.4 107.0" stroke="#d8d8d8" stroke-width="1.6"/>
<text x="166.4" y="110.4" text-anchor="middle" font-weight="bold" font-size="9.5" fill="#f4f4f4">90</text>
<path d="M176.1 122.1L171.6 121.3" stroke="#d8d8d8" stroke-width="1"/>
<text x="167.2" y="123.1" text-anchor="middle" font-size="7.2" fill="#c8c8c8">100</text>
<path d="M172.2 136.8L167.9 135.2" stroke="#d8d8d8" stroke-width="1"/>
<text x="163.7" y="136.3" text-anchor="middle" font-size="7.2" fill="#c8c8c8">110</text>
<path d="M165.7 150.5L161.8 148.2" stroke="#d8d8d8" stroke-width="1"/>
<text x="157.9" y="148.6" text-anchor="middle" font-size="7.2" fill="#c8c8c8">120</text>
<path d="M157.0 162.9L153.6 160.0" stroke="#d8d8d8" stroke-width="1"/>
<text x="150.2" y="159.7" text-anchor="middle" font-size="7.2" fill="#c8c8c8">130</text>
<path d="M146.3 173.6L143.4 170.2" stroke="#d8d8d8" stroke-width="1"/>
<text x="140.5" y="169.4" text-anchor="middle" font-size="7.2" fill="#c8c8c8">140</text>
<path d="M133.9 182.3L131.6 178.4" stroke="#d8d8d8" stroke-width="1"/>
<text x="129.4" y="177.1" text-anchor="middle" font-size="7.2" fill="#c8c8c8">150</text>
<path d="M120.2 188.8L118.6 184.5" stroke="#d8d8d8" stroke-width="1"/>
<text x="117.1" y="182.9" text-anchor="middle" font-size="7.2" fill="#c8c8c8">160</text>
<path d="M105.5 192.7L104.7 188.2" stroke="#d8d8d8" stroke-width="1"/>
<text x="103.9" y="186.4" text-anchor="middle" font-size="7.2" fill="#c8c8c8">170</text>
<path d="M90.4 194.0L90.4 187.0" stroke="#d8d8d8" stroke-width="1.6"/>
<text x="90.4" y="186.4" text-anchor="middle" font-weight="bold" font-size="9.5" fill="#f4f4f4">180</text>
<path d="M75.3 192.7L76.1 188.2" stroke="#d8d8d8" stroke-width="1"/>
<text x="76.9" y="186.4" text-anchor="middle" font-size="7.2" fill="#c8c8c8">190</text>
<path d="M60.6 188.8L62.2 184.5" stroke="#d8d8d8" stroke-width="1"/>
<text x="63.7" y="182.9" text-anchor="middle" font-size="7.2" fill="#c8c8c8">200</text>
<path d="M46.9 182.3L49.1 178.4" stroke="#d8d8d8" stroke-width="1"/>
<text x="51.4" y="177.1" text-anchor="middle" font-size="7.2" fill="#c8c8c8">210</text>
<path d="M34.5 173.6L37.4 170.2" stroke="#d8d8d8" stroke-width="1"/>
<text x="40.3" y="169.4" text-anchor="middle" font-size="7.2" fill="#c8c8c8">220</text>
<path d="M23.8 162.9L27.2 160.0" stroke="#d8d8d8" stroke-width="1"/>
<text x="30.6" y="159.7" text-anchor="middle" font-size="7.2" fill="#c8c8c8">230</text>
<path d="M15.1 150.5L19.0 148.3" stroke="#d8d8d8" stroke-width="1"/>
<text x="22.9" y="148.6" text-anchor="middle" font-size="7.2" fill="#c8c8c8">240</text>
<path d="M8.6 136.8L12.9 135.2" stroke="#d8d8d8" stroke-width="1"/>
<text x="17.1" y="136.3" text-anchor="middle" font-size="7.2" fill="#c8c8c8">250</text>
<path d="M4.7 122.1L9.2 121.3" stroke="#d8d8d8" stroke-width="1"/>
<text x="13.6" y="123.1" text-anchor="middle" font-size="7.2" fill="#c8c8c8">260</text>
<path d="M3.4 107.0L10.4 107.0" stroke="#d8d8d8" stroke-width="1.6"/>
<text x="14.4" y="110.4" text-anchor="middle" font-weight="bold" font-size="9.5" fill="#f4f4f4">270</text>
<path d="M4.7 91.9L9.2 92.7" stroke="#d8d8d8" stroke-width="1"/>
<text x="13.6" y="96.1" text-anchor="middle" font-size="7.2" fill="#c8c8c8">280</text>
<path d="M8.6 77.2L12.9 78.8" stroke="#d8d8d8" stroke-width="1"/>
<text x="17.1" y="82.9" text-anchor="middle" font-size="7.2" fill="#c8c8c8">290</text>
<path d="M15.1 63.5L19.0 65.8" stroke="#d8d8d8" stroke-width="1"/>
<text x="22.9" y="70.6" text-anchor="middle" font-size="7.2" fill="#c8c8c8">300</text>
<path d="M23.8 51.1L27.2 54.0" stroke="#d8d8d8" stroke-width="1"/>
<text x="30.6" y="59.5" text-anchor="middle" font-size="7.2" fill="#c8c8c8">310</text>
<path d="M34.5 40.4L37.4 43.8" stroke="#d8d8d8" stroke-width="1"/>
<text x="40.3" y="49.8" text-anchor="middle" font-size="7.2" fill="#c8c8c8">320</text>
<path d="M46.9 31.7L49.1 35.6" stroke="#d8d8d8" stroke-width="1"/>
<text x="51.4" y="42.1" text-anchor="middle" font-size="7.2" fill="#c8c8c8">330</text>
<path d="M60.6 25.2L62.2 29.5" stroke="#d8d8d8" stroke-width="1"/>
<text x="63.7" y="36.3" text-anchor="middle" font-size="7.2" fill="#c8c8c8">340</text>
<path d="M75.3 21.3L76.1 25.8" stroke="#d8d8d8" stroke-width="1"/>
<text x="76.9" y="32.8" text-anchor="middle" font-size="7.2" fill="#c8c8c8">350</text>
<polygon points="90.4,107.0 98.4,97.3 105.5,83.9 106.2,77.2 99.5,69.1 91.1,64.4 76.3,63.0 64.2,66.4 56.1,74.5 48.7,84.6 50.1,90.6 56.1,102.7 63.5,118.8 66.2,133.6 72.3,145.7 87.0,154.4 100.5,153.1 113.2,144.4 122.0,129.6 123.3,118.8 115.3,111.4 103.2,108.1" fill="#4a4a4a" fill-opacity="0.85" stroke="#d0d0d0" stroke-width="1"/>
<path d="M90.4 107.0L105.5 83.9M90.4 107.0L99.5 69.1M90.4 107.0L76.3 63.0M90.4 107.0L56.1 74.5M90.4 107.0L50.1 90.6M90.4 107.0L63.5 118.8M90.4 107.0L72.3 145.7M90.4 107.0L100.5 153.1M90.4 107.0L122.0 129.6M90.4 107.0L115.3 111.4" stroke="#c8c8c8" stroke-width="0.8" fill="none"/>
<polyline points="56.1,74.5 64.2,66.4 76.3,63.0 91.1,64.4 99.5,69.1 106.2,77.2 105.5,83.9 98.4,97.3 90.4,107.0" fill="none" stroke="#e8e070" stroke-width="1.3"/>
<polyline points="91.4,107.5 103.2,108.1 115.3,111.4 123.3,118.8 122.0,129.6 113.2,144.4 100.5,153.1 87.0,154.4" fill="none" stroke="#e8e070" stroke-width="1.3"/>
<g transform="translate(90.39999999999998,107) rotate(149)"><path d="M0 -21 L5 -10 L5.5 12 L4.5 26 H-4.5 L-5.5 12 L-5 -10Z" fill="#aaa" fill-opacity="0.3" stroke="#e0e0e0" stroke-width="0.9"/><path d="M0 -21 V26 M-3 -8 L3 24 M3 -8 L-3 24" stroke="#e8e8e8" stroke-width="0.6"/></g>
<path d="M90.39999999999998 107L128.0 169.6" stroke="#e0e0e0" stroke-width="1"/>
<polygon points="152,71.5 144.39999999999998,86.19999999999999 160.10000000000002,93.6" fill="#a8a000" stroke="#c8c040" stroke-width="0.6"/>
</svg>
<div class="t" style="left:731px;top:124px;font-size:13px;color:#000;font-weight:bold;">pough</div>
<svg style="left:753px;top:138px" width="31" height="39" viewBox="0 0 31 39"><rect width="31" height="39" fill="#e4f8fc"/><path d="M12.8 4 Q8 12 4.5 33 H12.8 Z" fill="#d8ceb2"/><path d="M14.3 8 Q21 20 24.5 34 L14.3 34 Z" fill="#ddd5bd"/><path d="M13.6 0.5 V34.5" stroke="#8c8c8c" stroke-width="1.3"/><rect x="3" y="32" width="10.5" height="1.6" fill="#9a9a9a"/><path d="M5 34 H26 L24 35.5 H8Z" fill="#d0c0a0"/><rect x="0" y="35.8" width="31" height="3.2" fill="#008a00"/><path d="M18.5 23.5 q1.5 0 1.2 2 q-0.5 2 -2 1.5" stroke="#556" stroke-width="0.8" fill="none"/></svg>
<div class="t" style="left:818px;top:143px;font-size:11px;color:#000;font-weight:bold;">Jib</div>
<div class="t" style="left:805px;top:167px;font-size:10.4px;color:#008080;">wind:</div>
<div class="t" style="left:780px;top:179px;font-size:15.6px;color:#000;font-weight:bold;">12.4</div>
<div class="t" style="left:817px;top:180px;font-size:10px;color:#008080;">/</div>
<div class="t" style="left:831px;top:179px;font-size:15.6px;color:#000;font-weight:bold;">69°</div>
<div class="t" style="left:777px;top:207px;font-size:10.4px;color:#008080;">course:</div>
<div class="t" style="left:819px;top:201px;font-size:20.3px;color:#000;font-weight:bold;">149°</div>
<div class="t" style="left:759px;top:232px;font-size:10.4px;color:#008080;">wind angle:</div>
<div class="t" style="left:827px;top:227px;font-size:20.3px;color:#000;font-weight:bold;">80°</div>
<div class="t" style="left:750px;top:268px;font-size:10.5px;color:#008080;">boat speed:</div>
<div class="t" style="left:805px;top:256px;font-size:24px;color:#000;font-weight:bold;">11.85</div>
<div class="t" style="left:777px;top:290px;font-size:10.5px;color:#008080;">VMC:</div>
<div class="t" style="left:830px;top:287px;font-size:14px;color:#000;font-weight:bold;">0</div>
<div class="t" style="left:580px;top:301px;font-size:13.5px;color:#008080;font-weight:bold;">to destination</div>
<div class="a" style="left:700px;top:311px;width:146px;height:1px;background:#fff"></div>
<div class="t" style="left:582px;top:319px;font-size:10.7px;color:#008080;">Direction:</div>
<div class="t" style="left:631px;top:316px;font-size:14px;color:#000;font-weight:bold;">0</div>
<div class="t" style="left:690px;top:318px;font-size:10.5px;color:#000;">0</div>
<div class="t" style="left:729px;top:319px;font-size:10.6px;color:#008080;">Distance:</div>
<div class="t" style="left:779px;top:316px;font-size:14px;color:#000;font-weight:bold;">0</div>
<div class="a" style="left:607px;top:335px;width:230px;height:17px;background:#e2e2e2"></div>
<div class="t" style="left:621px;top:335px;font-size:13px;color:#008080;">leg timer:</div>
<div class="t" style="left:714px;top:336px;font-size:15.8px;color:#000;">00D 00:00:00</div>
<div class="a" style="left:905px;top:101px;width:6px;height:616px;background:#e4e4e4"></div>
<div class="a" style="left:910px;top:121px;width:321px;height:595px;background:#ababab"></div>
<div class="a" style="left:910px;top:121px;width:321px;height:3px;background:#bdbdbd"></div>
<div class="a" style="left:1227px;top:121px;width:4px;height:400px;background:#c4c4c4"></div>
<div class="a" style="left:910px;top:539px;width:321px;height:177px;background:linear-gradient(#b0b0b0,#a4a4a4)"></div>
<div class="a" style="left:1231px;top:101px;width:2px;height:616px;background:#e8e8e8"></div>
<svg style="left:905px;top:98px" width="300" height="26" viewBox="905 98 300 26"><defs><linearGradient id="tabg" x1="0" y1="0" x2="0" y2="1"><stop offset="0" stop-color="#fbfbfb"/><stop offset="1" stop-color="#ebebeb"/></linearGradient></defs><path d="M1099.5 121.5 V104.5 Q1099.5 101.5 1102.5 101.5 H1151 L1170.5 121.5" fill="url(#tabg)" stroke="#9c9c9c" stroke-width="1"/><path d="M1037.0 121.5 V104.5 Q1037.0 101.5 1040.0 101.5 H1088.5 L1108.0 121.5" fill="url(#tabg)" stroke="#9c9c9c" stroke-width="1"/><path d="M974.0 121.5 V104.5 Q974.0 101.5 977.0 101.5 H1025.5 L1045.0 121.5" fill="url(#tabg)" stroke="#9c9c9c" stroke-width="1"/><path d="M911.5 121.5 V104.5 Q911.5 101.5 914.5 101.5 H963 L982.5 121.5" fill="url(#tabg)" stroke="#9c9c9c" stroke-width="1"/><path d="M921 112 L918 116 L921 120" stroke="#e06090" stroke-width="1" fill="none"/><circle cx="918.5" cy="116" r="1" fill="#6060c0"/><path d="M921 112 L925 108 Q927 105 930 105 Q932 106 930 109 L926 112Z" fill="#f0f000" stroke="#404000" stroke-width="0.7"/><path d="M992 104 L984 112 L982 109 L980 120 L991 118 L988 116 L996 108Z" fill="#70c8f0" stroke="#40a0e0" stroke-width="0.8"/><path d="M1042 112 H1059 L1056 119 H1045Z M1046 112 L1050.5 105 L1055 112" fill="#fff" stroke="#555" stroke-width="1.1"/><path d="M1111 119 L1112 116 L1118 109 Q1121 106 1123 108 Q1124 111 1120 113 L1114 118Z" fill="#8a2a08"/></svg>
<div class="t" style="left:934px;top:106px;font-size:10.8px;color:#000;">Tracks</div>
<div class="t" style="left:997px;top:106px;font-size:10.8px;color:#000;">Winds</div>
<div class="t" style="left:1063px;top:106px;font-size:10.8px;color:#000;">Boats</div>
<div class="t" style="left:1127px;top:106px;font-size:10.8px;color:#000;">Other</div>
<div class="a" style="left:914px;top:124px;width:313px;height:396px;background:#f0f0f0;border-left:1px solid #fafafa"></div>
<div class="a" style="left:914px;top:124px;width:313px;height:17px;background:linear-gradient(90deg,#fefefe,#f4f4f4 40%,#e8e8e8);border-radius:3px 3px 0 0"></div>
<div class="t" style="left:923px;top:126px;font-size:11.3px;color:#0a6ef0;font-weight:bold;">Tracks and routes</div>
<svg style="left:1207px;top:125px" width="15" height="15" viewBox="0 0 15 15"><circle cx="7.5" cy="7.5" r="6.8" fill="#fff"/><path d="M4 7 L7.5 3.8 L11 7 M4 11 L7.5 7.8 L11 11" fill="none" stroke="#0a64f0" stroke-width="1.5"/></svg>
<div class="a" style="left:919px;top:145px;width:87px;height:19px;border:1px solid #707070;border-bottom-color:#e0e0e0;border-right-color:#e0e0e0;background:#f0f0f0;box-shadow:inset 1px 1px 0 #a0a0a0"></div>
<svg style="left:1011px;top:147px" width="17" height="15" viewBox="0 0 17 15"><path d="M1 7 Q1 4 3 3 V1 H6 V4 Q8 5 8 7 V14 H1Z M9 7 Q9 5 11 4 V1 H14 V3 Q16 4 16 7 V14 H9Z" fill="#111"/><path d="M2.5 9 V13 M10.5 9 V13" stroke="#888" stroke-width="1"/><rect x="7" y="6" width="3" height="3" fill="#111"/></svg>
<div class="t" style="left:919px;top:169px;font-size:9.8px;color:#008a94;">Routes:</div>
<div class="t" style="left:965px;top:169px;font-size:11px;color:#000;">0</div>
<div class="t" style="left:994px;top:169px;font-size:9.8px;color:#008a94;">Tracks:</div>
<div class="t" style="left:1043px;top:169px;font-size:11px;color:#000;">0</div>
<div class="a" style="left:919px;top:185px;width:159px;height:140px;border:1px solid #828282;background:#000080"></div>
<div class="a" style="left:1060px;top:186px;width:17px;height:138px;background:#f0f0f0;border-left:1px solid #ddd"></div>
<svg style="left:1060px;top:186px" width="17" height="138" viewBox="0 0 17 138"><path d="M5 11 H12 L8.5 7.5Z" fill="#000"/><path d="M5 129 H12 L8.5 132.5Z" fill="#000"/><rect x="1.5" y="18.5" width="14" height="29" rx="1" fill="#e8e8e8" stroke="#a0a0a0"/><path d="M5 30.5H12M5 32.5H12M5 34.5H12" stroke="#555" stroke-width="1"/></svg>
<div class="a" style="left:920px;top:186px;width:140px;height:138px;overflow:hidden"><svg style="left:2px;top:1px" width="25" height="12" viewBox="0 0 25 12"><rect x="0" y="1" width="9" height="9" fill="#d8d8d8" stroke="#fff" stroke-width="0.6"/><path d="M2 3 L7 8 M7 3 L2 8" stroke="#000" stroke-width="1.6"/><path d="M11 11 L16 6" stroke="#40a0ff" stroke-width="1" stroke-dasharray="1 1"/><path d="M15 6 L19 2 Q22 0 22 3 L18 7 Q16 8 15 6Z" fill="#ffff00"/></svg><div class="t" style="left:27px;top:1px;font-size:10.7px;color:#ffff00">TR_pough</div><svg style="left:2px;top:14px" width="25" height="12" viewBox="0 0 25 12"><rect x="0" y="1" width="9" height="9" fill="#d8d8d8" stroke="#fff" stroke-width="0.6"/><path d="M2 3 L7 8 M7 3 L2 8" stroke="#000" stroke-width="1.6"/><path d="M11 11 L16 6" stroke="#40a0ff" stroke-width="1" stroke-dasharray="1 1"/><path d="M15 6 L19 2 Q22 0 22 3 L18 7 Q16 8 15 6Z" fill="#ffff00"/></svg><div class="t" style="left:27px;top:14px;font-size:10.7px;color:#00ffff">TR_Hugo 28 RKN</div><svg style="left:2px;top:27px" width="25" height="12" viewBox="0 0 25 12"><rect x="0" y="1" width="9" height="9" fill="#d8d8d8" stroke="#fff" stroke-width="0.6"/><path d="M2 3 L7 8 M7 3 L2 8" stroke="#000" stroke-width="1.6"/><path d="M11 11 L16 6" stroke="#40a0ff" stroke-width="1" stroke-dasharray="1 1"/><path d="M15 6 L19 2 Q22 0 22 3 L18 7 Q16 8 15 6Z" fill="#ffff00"/></svg><div class="t" style="left:27px;top:27px;font-size:10.7px;color:#008000">TR_drakbol</div><svg style="left:2px;top:40px" width="25" height="12" viewBox="0 0 25 12"><rect x="0" y="1" width="9" height="9" fill="#d8d8d8" stroke="#fff" stroke-width="0.6"/><path d="M2 3 L7 8 M7 3 L2 8" stroke="#000" stroke-width="1.6"/><path d="M11 11 L16 6" stroke="#40a0ff" stroke-width="1" stroke-dasharray="1 1"/><path d="M15 6 L19 2 Q22 0 22 3 L18 7 Q16 8 15 6Z" fill="#ffff00"/></svg><div class="t" style="left:27px;top:40px;font-size:10.7px;color:#ff00ff">TR_junak73_zegluj</div><svg style="left:2px;top:53px" width="25" height="12" viewBox="0 0 25 12"><rect x="0" y="1" width="9" height="9" fill="#d8d8d8" stroke="#fff" stroke-width="0.6"/><path d="M2 3 L7 8 M7 3 L2 8" stroke="#000" stroke-width="1.6"/><path d="M11 11 L16 6" stroke="#40a0ff" stroke-width="1" stroke-dasharray="1 1"/><path d="M15 6 L19 2 Q22 0 22 3 L18 7 Q16 8 15 6Z" fill="#ffff00"/></svg><div class="t" style="left:27px;top:53px;font-size:10.7px;color:#00ff00">TR_Ruda_Trzy_zegluj</div><svg style="left:2px;top:66px" width="25" height="12" viewBox="0 0 25 12"><rect x="0" y="1" width="9" height="9" fill="#d8d8d8" stroke="#fff" stroke-width="0.6"/><path d="M2 3 L7 8 M7 3 L2 8" stroke="#000" stroke-width="1.6"/><path d="M11 11 L16 6" stroke="#40a0ff" stroke-width="1" stroke-dasharray="1 1"/><path d="M15 6 L19 2 Q22 0 22 3 L18 7 Q16 8 15 6Z" fill="#ffff00"/></svg><div class="t" style="left:27px;top:66px;font-size:10.7px;color:#ffff00">TR_GRYF II</div><svg style="left:2px;top:79px" width="25" height="12" viewBox="0 0 25 12"><rect x="0" y="1" width="9" height="9" fill="#d8d8d8" stroke="#fff" stroke-width="0.6"/><path d="M2 3 L7 8 M7 3 L2 8" stroke="#000" stroke-width="1.6"/><path d="M11 11 L16 6" stroke="#40a0ff" stroke-width="1" stroke-dasharray="1 1"/><path d="M15 6 L19 2 Q22 0 22 3 L18 7 Q16 8 15 6Z" fill="#ffff00"/></svg><div class="t" style="left:27px;top:79px;font-size:10.7px;color:#ffff00">TR_dzidzia</div><svg style="left:2px;top:92px" width="25" height="12" viewBox="0 0 25 12"><rect x="0" y="1" width="9" height="9" fill="#d8d8d8" stroke="#fff" stroke-width="0.6"/><path d="M2 3 L7 8 M7 3 L2 8" stroke="#000" stroke-width="1.6"/><path d="M11 11 L16 6" stroke="#40a0ff" stroke-width="1" stroke-dasharray="1 1"/><path d="M15 6 L19 2 Q22 0 22 3 L18 7 Q16 8 15 6Z" fill="#ffff00"/></svg><div class="t" style="left:27px;top:92px;font-size:10.7px;color:#ff00ff">TR_creme35</div><svg style="left:2px;top:105px" width="25" height="12" viewBox="0 0 25 12"><rect x="0" y="1" width="9" height="9" fill="#d8d8d8" stroke="#fff" stroke-width="0.6"/><path d="M2 3 L7 8 M7 3 L2 8" stroke="#000" stroke-width="1.6"/><path d="M11 11 L16 6" stroke="#40a0ff" stroke-width="1" stroke-dasharray="1 1"/><path d="M15 6 L19 2 Q22 0 22 3 L18 7 Q16 8 15 6Z" fill="#ffff00"/></svg><div class="t" style="left:27px;top:105px;font-size:10.7px;color:#ffff00">TR_chocotte44</div><svg style="left:2px;top:118px" width="25" height="12" viewBox="0 0 25 12"><rect x="0" y="1" width="9" height="9" fill="#d8d8d8" stroke="#fff" stroke-width="0.6"/><path d="M2 3 L7 8 M7 3 L2 8" stroke="#000" stroke-width="1.6"/><path d="M11 11 L16 6" stroke="#40a0ff" stroke-width="1" stroke-dasharray="1 1"/><path d="M15 6 L19 2 Q22 0 22 3 L18 7 Q16 8 15 6Z" fill="#ffff00"/></svg><div class="t" style="left:27px;top:118px;font-size:10.7px;color:#00ff00">TR_Dlugi_zegluj</div><svg style="left:2px;top:131px" width="25" height="12" viewBox="0 0 25 12"><rect x="0" y="1" width="9" height="9" fill="#d8d8d8" stroke="#fff" stroke-width="0.6"/><path d="M2 3 L7 8 M7 3 L2 8" stroke="#000" stroke-width="1.6"/><path d="M11 11 L16 6" stroke="#40a0ff" stroke-width="1" stroke-dasharray="1 1"/><path d="M15 6 L19 2 Q22 0 22 3 L18 7 Q16 8 15 6Z" fill="#ffff00"/></svg><div class="t" style="left:27px;top:131px;font-size:10.7px;color:#008000">TR_Krzys_zegluj.net</div></div>
<svg style="left:1098px;top:151px" width="10" height="10" viewBox="0 0 10 10"><rect x="0.5" y="0.5" width="9" height="9" fill="#c8c8c8" stroke="#888"/><path d="M2 5 L4 7.5 L8 2.5" fill="none" stroke="#222" stroke-width="1.2"/></svg>
<div class="t" style="left:1117px;top:151px;font-size:9.4px;color:#000;">toggle all</div>
<div class="a" style="left:1096px;top:162px;width:66px;height:13px;border-top:1px solid #a8a8a8;border-left:1px solid #a8a8a8;background:#ececec"></div>
<svg style="left:1099px;top:164px" width="10" height="10" viewBox="0 0 10 10"><rect x="0.5" y="0.5" width="9" height="9" fill="#c8c8c8" stroke="#888"/><path d="M2 5 L4 7.5 L8 2.5" fill="none" stroke="#222" stroke-width="1.2"/></svg>
<div class="t" style="left:1118px;top:165px;font-size:9.8px;color:#000;">TR_boats</div>
<div class="a" style="left:1096px;top:175px;width:66px;height:13px;border-top:1px solid #a8a8a8;border-left:1px solid #a8a8a8;background:#ececec"></div>
<svg style="left:1099px;top:177px" width="10" height="10" viewBox="0 0 10 10"><rect x="0.5" y="0.5" width="9" height="9" fill="#c8c8c8" stroke="#888"/><path d="M2 5 L4 7.5 L8 2.5" fill="none" stroke="#222" stroke-width="1.2"/></svg>
<div class="t" style="left:1118px;top:178px;font-size:9.8px;color:#000;">designed</div>
<div class="a" style="left:1096px;top:188px;width:66px;height:13px;border-top:1px solid #a8a8a8;border-left:1px solid #a8a8a8;background:#ececec"></div>
<svg style="left:1099px;top:190px" width="10" height="10" viewBox="0 0 10 10"><rect x="0.5" y="0.5" width="9" height="9" fill="#c8c8c8" stroke="#888"/><path d="M2 5 L4 7.5 L8 2.5" fill="none" stroke="#222" stroke-width="1.2"/></svg>
<div class="t" style="left:1118px;top:191px;font-size:9.8px;color:#000;">routes</div>
<svg style="left:1109px;top:210px" width="16" height="16" viewBox="0 0 16 16"><path d="M2 2 L14 14 M14 2 L2 14" stroke="#1040a0" stroke-width="2"/></svg>
<div class="t" style="left:1129px;top:213px;font-size:9.4px;color:#008a94;">delete</div>
<svg style="left:1111px;top:232px" width="16" height="17" viewBox="0 0 16 17"><path d="M1 1 H7 L9 3 V11 H1Z" fill="#fff" stroke="#4a70b0"/><path d="M5 5 H11 L15 9 V16 H5Z" fill="#fff4a0" stroke="#a08020"/></svg>
<div class="t" style="left:1131px;top:236px;font-size:9.6px;color:#008a94;">copy</div>
<svg style="left:1097px;top:254px" width="18" height="19" viewBox="0 0 18 19"><rect x="1" y="3" width="11" height="13" fill="#f0c860" stroke="#a07020"/><rect x="4" y="1" width="5" height="3" fill="#4a70b0"/><path d="M7 8 H12 L16 12 V18 H7Z" fill="#fff" stroke="#4a70b0"/></svg>
<div class="t" style="left:1117px;top:258px;font-size:9.5px;color:#008a94;">paste new..</div>
<svg style="left:1087px;top:279px" width="13" height="13" viewBox="0 0 13 13"><rect x="0.5" y="0.5" width="12" height="12" fill="#fff" stroke="#8a8a8a"/><path d="M2.5 6 L5 9 L10 3" fill="none" stroke="#2a8af0" stroke-width="2"/></svg>
<div class="t" style="left:1104px;top:279px;font-size:9.5px;color:#008a94;">show names</div>
<svg style="left:1087px;top:294px" width="13" height="13" viewBox="0 0 13 13"><rect x="0.5" y="0.5" width="12" height="12" fill="#fff" stroke="#8a8a8a"/><path d="M2.5 6 L5 9 L10 3" fill="none" stroke="#2a8af0" stroke-width="2"/></svg>
<div class="t" style="left:1104px;top:294px;font-size:9.5px;color:#008a94;">show points</div>
<svg style="left:1087px;top:308px" width="13" height="13" viewBox="0 0 13 13"><rect x="0.5" y="0.5" width="12" height="12" fill="#fff" stroke="#8a8a8a"/><path d="M2.5 6 L5 9 L10 3" fill="none" stroke="#2a8af0" stroke-width="2"/></svg>
<div class="t" style="left:1104px;top:308px;font-size:9.5px;color:#008a94;">show track lines</div>
<div class="a" style="left:918px;top:330px;width:301px;height:185px;border:1px solid #a8a8a8;box-shadow:inset 1px 1px 0 #fff, 1px 1px 0 #fff"></div>
<div class="t" style="left:938px;top:338px;font-size:11.2px;color:#008a94;">Track:</div>
<div class="a" style="left:970px;top:334px;width:126px;height:19px;border:1px solid #7a7a7a;background:#f0f0f0"></div>
<div class="t" style="left:944px;top:359px;font-size:11.2px;color:#008a94;">type:</div>
<div class="a" style="left:970px;top:355px;width:104px;height:21px;border:2px solid #8a8a8a;border-right-color:#e8e8e8;border-bottom-color:#e8e8e8;background:#f0f0f0"></div>
<div class="a" style="left:1056px;top:357px;width:16px;height:17px;background:#f0f0f0;border:1px solid #fff;border-right-color:#777;border-bottom-color:#777"></div>
<svg style="left:1059px;top:363px" width="10" height="6" viewBox="0 0 10 6"><path d="M1 0.5 H9 L5 5Z" fill="#000"/></svg>
<div class="t" style="left:975px;top:360px;font-size:10.2px;color:#111;">monohull</div>
<div class="t" style="left:936px;top:384px;font-size:11.2px;color:#008a94;">width:</div>
<div class="a" style="left:970px;top:381px;width:34px;height:22px;border:1px solid #707070;background:#f0f0f0"></div>
<div class="t" style="left:973px;top:384px;font-size:12px;color:#000;">1</div>
<div class="a" style="left:989px;top:383px;width:14px;height:9px;background:#f0f0f0;border-right:1px solid #888;border-bottom:1px solid #888"></div>
<div class="a" style="left:989px;top:392px;width:14px;height:9px;background:#f0f0f0;border-right:1px solid #888;border-bottom:1px solid #888"></div>
<svg style="left:990px;top:384px" width="12" height="17" viewBox="0 0 12 17"><path d="M2 6 H10 L6 2Z M2 11 H10 L6 15Z" fill="#000"/></svg>
<div class="t" style="left:1018px;top:384px;font-size:11.2px;color:#008a94;">color:</div>
<div class="a" style="left:1048px;top:384px;width:17px;height:12px;background:#007800;border:1px solid #a8a8a8"></div>
<svg style="left:1071px;top:387px" width="9" height="6" viewBox="0 0 9 6"><path d="M0.5 0.5 H8.5 L4.5 5Z" fill="#000"/></svg>
<svg style="left:1107px;top:334px" width="13" height="13" viewBox="0 0 13 13"><rect x="0.5" y="0.5" width="12" height="12" fill="#fff" stroke="#8a8a8a"/><path d="M2.5 6 L5 9 L10 3" fill="none" stroke="#2a8af0" stroke-width="2"/></svg>
<div class="t" style="left:1125px;top:335px;font-size:9.4px;color:#008a94;">visible</div>
<svg style="left:1107px;top:349px" width="13" height="13" viewBox="0 0 13 13"><rect x="0.5" y="0.5" width="12" height="12" fill="#fff" stroke="#8a8a8a"/></svg>
<div class="t" style="left:1125px;top:350px;font-size:9.4px;color:#008a94;">show text</div>
<svg style="left:1107px;top:364px" width="13" height="13" viewBox="0 0 13 13"><rect x="0.5" y="0.5" width="12" height="12" fill="#fff" stroke="#8a8a8a"/><path d="M2.5 6 L5 9 L10 3" fill="none" stroke="#2a8af0" stroke-width="2"/></svg>
<div class="t" style="left:1125px;top:365px;font-size:9.4px;color:#008a94;">show boat</div>
<svg style="left:1107px;top:379px" width="13" height="13" viewBox="0 0 13 13"><rect x="0.5" y="0.5" width="12" height="12" fill="#fff" stroke="#8a8a8a"/></svg>
<div class="t" style="left:1125px;top:380px;font-size:9.4px;color:#008a94;">show wind</div>
<div class="t" style="left:1094px;top:411px;font-size:10.8px;color:#008a94;">opacity</div>
<div class="a" style="left:1139px;top:413px;width:62px;height:8px;background:#fff"></div>
<div class="a" style="left:1139px;top:413px;width:53px;height:8px;background:#9c9c9c"></div>
<div class="a" style="left:1200px;top:413px;width:1px;height:8px;background:#888"></div>
<div class="t" style="left:940px;top:432px;font-size:10.8px;color:#008a94;">points</div>
<svg style="left:990px;top:450px" width="30" height="17" viewBox="0 0 30 17"><path d="M1 15 L12 5" stroke="#000" stroke-width="1.4" stroke-dasharray="2 1.5"/><path d="M9 8 L13 6 L11 10Z" fill="#e00"/><path d="M14 15 L21 8" stroke="#2040c0" stroke-width="0.9"/><path d="M20 8 L26 2 Q29 0 28 3 L22 10Z" fill="#ffff00" stroke="#000" stroke-width="0.7"/></svg>
<div class="t" style="left:1023px;top:455px;font-size:9.6px;color:#111;">Mark Track (12h, 24h ..)</div>
<div class="a" style="left:957px;top:471px;width:201px;height:20px;background:linear-gradient(#f6f6f6,#ececec);border:1px solid #fff;border-right-color:#8a8a8a;border-bottom-color:#8a8a8a;box-shadow:inset -1px -1px 0 #c8c8c8"></div>
<div class="t" style="left:1029px;top:477px;font-size:9.1px;color:#111;">Generate Schedule</div>
<div class="a" style="left:957px;top:494px;width:201px;height:18px;background:linear-gradient(#f6f6f6,#ececec);border:1px solid #fff;border-right-color:#8a8a8a;border-bottom-color:#8a8a8a;box-shadow:inset -1px -1px 0 #c8c8c8"></div>
<div class="t" style="left:1012px;top:500px;font-size:9.3px;color:#111;">Add point to selected Track</div>
<svg style="left:1008px;top:472px" width="17" height="18" viewBox="0 0 17 18"><circle cx="8.5" cy="10" r="6.5" fill="#fff" stroke="#c01010" stroke-width="2.4"/><path d="M1 4 Q2 0 6 2 M16 4 Q15 0 11 2" fill="#c01010" stroke="#800" stroke-width="1.5"/><path d="M8.5 6 V10 H11" stroke="#000" stroke-width="1.2" fill="none"/><path d="M3 17 L5 15 M14 17 L12 15" stroke="#600" stroke-width="1.5"/></svg>
<svg style="left:992px;top:494px" width="17" height="17" viewBox="0 0 17 17"><path d="M1 16 L7 10" stroke="#333" stroke-width="1"/><path d="M5 8 L10 3 L14 7 L9 12Z" fill="#2a70e0" stroke="#1a4aa0" stroke-width="0.8"/><circle cx="12.5" cy="4" r="3.2" fill="#3a8af0" stroke="#1a4aa0" stroke-width="0.8"/></svg>
<div class="a" style="left:914px;top:523px;width:313px;height:16px;background:linear-gradient(90deg,#fff,#fff 55%,#e0e0e0);border-radius:3px 3px 0 0"></div>
<svg style="left:1207px;top:523px" width="15" height="15" viewBox="0 0 15 15"><circle cx="7.5" cy="7.5" r="6.8" fill="#fff" stroke="#ddd" stroke-width="0.5"/><path d="M4 4 L7.5 7.2 L11 4 M4 8 L7.5 11.2 L11 8" fill="none" stroke="#0a64f0" stroke-width="1.5"/></svg>
<!-- toolbar row2 -->
<svg style="left:28px;top:78px" width="22" height="22" viewBox="0 0 22 22"><defs><radialGradient id="noaag" cx="0.35" cy="0.3" r="0.8"><stop offset="0" stop-color="#8aa0e8"/><stop offset="0.6" stop-color="#3048b0"/><stop offset="1" stop-color="#1a2a80"/></radialGradient></defs><circle cx="11" cy="11" r="10" fill="url(#noaag)"/><path d="M4 16 L11 11 L12 8 M11 11 L16 6 L16 3" fill="none" stroke="#40e8f8" stroke-width="1.6"/></svg>
<div class="t" style="left:54px;top:85px;font-size:9px;color:#2828e8;transform:scaleX(0.88);transform-origin:left;-webkit-text-stroke:0.3px #2828e8">NOAA</div>
<div class="t" style="left:83px;top:81px;font-size:8px;font-weight:bold;color:#801a90;transform:scaleX(0.8);transform-origin:left">WiND</div>
<svg style="left:87px;top:88px" width="12" height="10" viewBox="0 0 12 10"><path d="M1 1 H7 L9 4 L11 3 L9 9 L5 6 L7 5 L6 3 H1Z" fill="#f07010"/></svg>
<svg style="left:144px;top:76px" width="28" height="24" viewBox="144 76 28 24"><path d="M147.5 79 L150.7 83.6 L158.2 86.8 L162.5 92.6 L163.6 97.5 M150.7 83.6 L156.3 83.2 M150.7 83.6 L154.8 89 M158.2 86.8 L164.6 86 M158.2 86.8 L164.2 89.8 M162.5 92.6 L168 93.6 M162.5 92.6 L166.8 96.6" fill="none" stroke="#1a3ac8" stroke-width="1.5" stroke-linecap="round"/><circle cx="150.7" cy="83.6" r="1.1" fill="#e05010"/><circle cx="158.2" cy="86.8" r="1.1" fill="#e05010"/><circle cx="162.5" cy="92.6" r="1.1" fill="#e05010"/></svg>
<div class="t" style="left:173px;top:85px;font-size:10px;color:#1a2080;transform:scaleX(0.79);transform-origin:left">routing</div>
<svg style="left:219px;top:78px" width="22" height="22" viewBox="0 0 22 22"><clipPath id="rgc"><circle cx="11" cy="11" r="10"/></clipPath><g clip-path="url(#rgc)"><path d="M11 11 L0 0 H22Z" fill="#f4e010"/><path d="M11 11 L22 0 V22Z" fill="#1830e0"/><path d="M11 11 L22 22 H0Z" fill="#e01010"/><path d="M11 11 L0 22 V0Z" fill="#101010"/></g></svg>
<div class="t" style="left:245px;top:85px;font-size:10px;color:#6a0a10;transform:scaleX(0.79);transform-origin:left">regatta</div>
<svg style="left:285px;top:78px" width="22" height="22" viewBox="0 0 22 22"><circle cx="11" cy="11" r="10" fill="#f07818"/><text x="11" y="15" text-anchor="middle" font-size="10" font-style="italic" fill="#f8e040">web</text></svg>
<div class="t" style="left:311px;top:85px;font-size:10px;color:#f00a0a;transform:scaleX(0.79);transform-origin:left">webserver</div>
<svg style="left:460px;top:79px" width="13" height="18" viewBox="0 0 13 18"><rect x="0.8" y="0.8" width="11.4" height="16.4" rx="1.5" fill="#e8e8e8" stroke="#111" stroke-width="1.4"/><rect x="3" y="3" width="7" height="3" fill="#30c0c0"/><g fill="#111"><rect x="3" y="8" width="1.6" height="1.6"/><rect x="5.7" y="8" width="1.6" height="1.6"/><rect x="8.4" y="8" width="1.6" height="1.6"/><rect x="3" y="10.7" width="1.6" height="1.6"/><rect x="5.7" y="10.7" width="1.6" height="1.6"/><rect x="8.4" y="10.7" width="1.6" height="1.6"/><rect x="3" y="13.4" width="1.6" height="1.6"/><rect x="5.7" y="13.4" width="1.6" height="1.6"/></g><rect x="8.4" y="13.4" width="1.8" height="1.6" fill="#e02020"/></svg>
<div class="t" style="left:511px;top:84px;font-size:10.5px;font-weight:bold;color:#9020a0;transform:scaleX(0.85);transform-origin:left">3D</div>
<svg style="left:532px;top:77px" width="22" height="22" viewBox="0 0 22 22"><path d="M10 1 L11 16 L2 16Z" fill="#f0e020" stroke="#000" stroke-width="0.7"/><path d="M11 1 V17" stroke="#000" stroke-width="1"/><path d="M12 8 L19 15 H12Z" fill="#f040c0"/><path d="M2 17 H20 L17 20 H5Z" fill="#20a0f0"/><path d="M1 21 Q11 18 21 21" stroke="#2080e0" stroke-width="1" fill="none"/></svg>
<svg style="left:557px;top:77px" width="23" height="22" viewBox="0 0 23 22"><defs><radialGradient id="ffg" cx="0.6" cy="0.4" r="0.6"><stop offset="0" stop-color="#4a90e0"/><stop offset="1" stop-color="#1a3a90"/></radialGradient></defs><circle cx="11.5" cy="11" r="10" fill="url(#ffg)"/><path d="M4 4 Q1 10 4 16 Q9 22 16 20 Q21 17 21 11 Q19 16 13 16 Q8 15 8 10 Q9 6 12 6 Q9 4 10 1 Q6 1 4 4Z" fill="#e86a10"/><path d="M5 5 Q3 11 6 15" stroke="#f8b040" stroke-width="1.5" fill="none"/></svg>
<svg style="left:617px;top:81px" width="14" height="14" viewBox="0 0 14 14"><rect x="0.5" y="0.5" width="13" height="13" fill="#fff" stroke="#8a8a8a"/><path d="M3 7 L5.5 10 L11 3.5" fill="none" stroke="#2a8af0" stroke-width="2"/></svg>
<svg style="left:631px;top:81px" width="14" height="14" viewBox="0 0 14 14"><path d="M3.5 0.5 V13.5 M7 0.5 V13.5 M10.5 0.5 V13.5 M0.5 3 H13.5 M0.5 7 H13.5 M0.5 11 H13.5" stroke="#000" stroke-width="1.2"/></svg>
<svg style="left:656px;top:81px" width="14" height="14" viewBox="0 0 14 14"><rect x="0.5" y="0.5" width="13" height="13" fill="#fff" stroke="#8a8a8a"/><path d="M3 7 L5.5 10 L11 3.5" fill="none" stroke="#2a8af0" stroke-width="2"/></svg>
<svg style="left:672px;top:81px" width="27" height="14" viewBox="0 0 27 14"><path d="M0 6.5 H26 M4 1 V13 M13 3 V13 M22 1 V13" stroke="#000" stroke-width="1.2"/><rect x="1.5" y="3.5" width="5" height="5" fill="#e02020" stroke="#000"/><rect x="10.5" y="7.5" width="5" height="4" fill="#20c020" stroke="#000"/><rect x="19.5" y="3.5" width="5" height="5" fill="#2040e0" stroke="#000"/></svg>
<svg style="left:710px;top:81px" width="14" height="14" viewBox="0 0 14 14"><rect x="0.5" y="0.5" width="13" height="13" fill="#fff" stroke="#8a8a8a"/><path d="M3 7 L5.5 10 L11 3.5" fill="none" stroke="#2a8af0" stroke-width="2"/></svg>
<div class="t" style="left:729px;top:82px;font-size:11px;font-weight:bold;color:#1818e8">BA</div>

<!-- vertical lat scrollbar -->
<div class="a" style="left:1233px;top:101px;width:17px;height:616px;background:#f0f0f0;border-left:1px solid #fff"></div>
<div class="t" style="left:1236px;top:128px;font-size:10.5px;color:#111">N</div>
<div class="a" style="left:1233px;top:140px;width:17px;height:226px;background:repeating-conic-gradient(#fafafa 0 25%,#e6e6e6 0 50%) 0 0/2px 2px"></div>
<div class="a" style="left:1233px;top:140px;width:17px;height:17px;background:#f0f0f0;border:1px solid #fff;border-right-color:#6e6e6e;border-bottom-color:#6e6e6e;box-shadow:inset -1px -1px 0 #b0b0b0"></div>
<svg style="left:1237px;top:145px" width="9" height="5" viewBox="0 0 9 5"><path d="M0.5 4.5 H8.5 L4.5 0.5Z" fill="#000"/></svg>
<div class="a" style="left:1233px;top:283px;width:17px;height:17px;background:#f0f0f0;border:1px solid #fff;border-right-color:#6e6e6e;border-bottom-color:#6e6e6e;box-shadow:inset -1px -1px 0 #b0b0b0"></div>
<div class="a" style="left:1233px;top:365px;width:17px;height:17px;background:#f0f0f0;border:1px solid #fff;border-right-color:#6e6e6e;border-bottom-color:#6e6e6e;box-shadow:inset -1px -1px 0 #b0b0b0"></div>
<svg style="left:1237px;top:371px" width="9" height="5" viewBox="0 0 9 5"><path d="M0.5 0.5 H8.5 L4.5 4.5Z" fill="#000"/></svg>
<div class="t" style="left:1237px;top:392px;font-size:10.5px;color:#111">S</div>

<!-- status bar -->
<div class="a" style="left:8px;top:717px;width:1242px;height:18px;background:#f0f0f0"></div>
<div class="t" style="left:16px;top:721px;font-size:10.5px;color:#111">W</div>
<div class="a" style="left:49px;top:717px;width:200px;height:17px;background:repeating-conic-gradient(#fafafa 0 25%,#e6e6e6 0 50%) 0 0/2px 2px"></div>
<div class="a" style="left:31px;top:717px;width:18px;height:17px;background:#f0f0f0;border:1px solid #fff;border-right-color:#6e6e6e;border-bottom-color:#6e6e6e;box-shadow:inset -1px -1px 0 #b0b0b0"></div>
<svg style="left:37px;top:721px" width="5" height="9" viewBox="0 0 5 9"><path d="M4.5 0.5 V8.5 L0.5 4.5Z" fill="#000"/></svg>
<div class="a" style="left:131px;top:717px;width:17px;height:17px;background:#f0f0f0;border:1px solid #fff;border-right-color:#6e6e6e;border-bottom-color:#6e6e6e"></div>
<div class="a" style="left:133px;top:719px;width:13px;height:13px;background:repeating-conic-gradient(#1a1a1a 0 25%,#e0e0e0 0 50%) 0 0/2px 2px"></div>
<div class="a" style="left:232px;top:717px;width:18px;height:17px;background:#f0f0f0;border:1px solid #fff;border-right-color:#6e6e6e;border-bottom-color:#6e6e6e;box-shadow:inset -1px -1px 0 #b0b0b0"></div>
<svg style="left:239px;top:721px" width="5" height="9" viewBox="0 0 5 9"><path d="M0.5 0.5 V8.5 L4.5 4.5Z" fill="#000"/></svg>
<div class="t" style="left:256px;top:721px;font-size:10.5px;color:#111">E</div>
<div class="t" style="left:283px;top:721px;font-size:10px;color:#111">6°54.00'W</div>
<div class="t" style="left:432px;top:721px;font-size:10px;color:#111">Ok</div>
<div class="t" style="left:1190px;top:721px;font-size:9.7px;color:#111">28°24.00'S</div>
<div class="a" style="left:1232px;top:715px;width:18px;height:1px;background:#b8b8b8"></div><div class="a" style="left:1232px;top:101px;width:1px;height:614px;background:#fff"></div>
<div class="a" style="left:1231px;top:714px;width:19px;height:3px;background:#f0f0f0"></div>

<!-- bottom glass border -->
<div class="a" style="left:0;top:742px;width:1260px;height:2px;background:#0a0a1e"></div>
<div class="a" style="left:0;top:742px;width:910px;height:2px;background:#06081e"></div>
<div class="a" style="left:910px;top:742px;width:350px;height:2px;background:#383838"></div>
<div class="a" style="left:7px;top:735px;width:903px;height:7px;background:linear-gradient(#2a2a3a 0,#2a2a3a 1px,#a8acc8 1px,#a8acc8 2px,rgba(0,0,0,0) 2px,rgba(0,0,0,0) 5.5px,#d8d8e8 5.5px),linear-gradient(90deg,#c0c4d0,#3a3c72 60px,#383a70 500px,#1e3a6c 880px,#20406e)"></div>
<div class="a" style="left:910px;top:735px;width:348px;height:7px;background:linear-gradient(#2a2a2a 0,#2a2a2a 1px,#f0f0f4 1px,#f0f0f4 2px,rgba(0,0,0,0) 2px,rgba(0,0,0,0) 5.5px,#f4f4f8 5.5px),linear-gradient(90deg,#b8bcc0,#d8dadc 20px,#d0dae6 100px,#dce2ea 300px,#c8ccd0);border-radius:0 0 7px 0"></div>
<div class="a" style="left:7px;top:735px;width:40px;height:7px;background:linear-gradient(90deg,#c8ccd4,rgba(200,204,212,0));"></div>
<div class="a" style="left:1px;top:28px;width:6px;height:714px;background:linear-gradient(90deg,#f4f6f8 0,#f4f6f8 1px,#d8dce0 2px,#c4c8cc 6px)"></div>
<div class="a" style="left:2px;top:190px;width:5px;height:70px;background:#5a6068;filter:blur(3px);opacity:0.8"></div>
<div class="a" style="left:2px;top:300px;width:5px;height:60px;background:#8a9098;filter:blur(3px);opacity:0.6"></div>
<div class="a" style="left:1251px;top:20px;width:6px;height:716px;background:linear-gradient(90deg,#ececec 0,#ececec 1px,#9c9c9c 1.5px,#b8b8b8 4px,#eeeeee 5px)"></div>
<div class="a" style="left:1252px;top:100px;width:3px;height:36px;background:#303030;filter:blur(1.5px);opacity:0.8"></div>

</body></html>
